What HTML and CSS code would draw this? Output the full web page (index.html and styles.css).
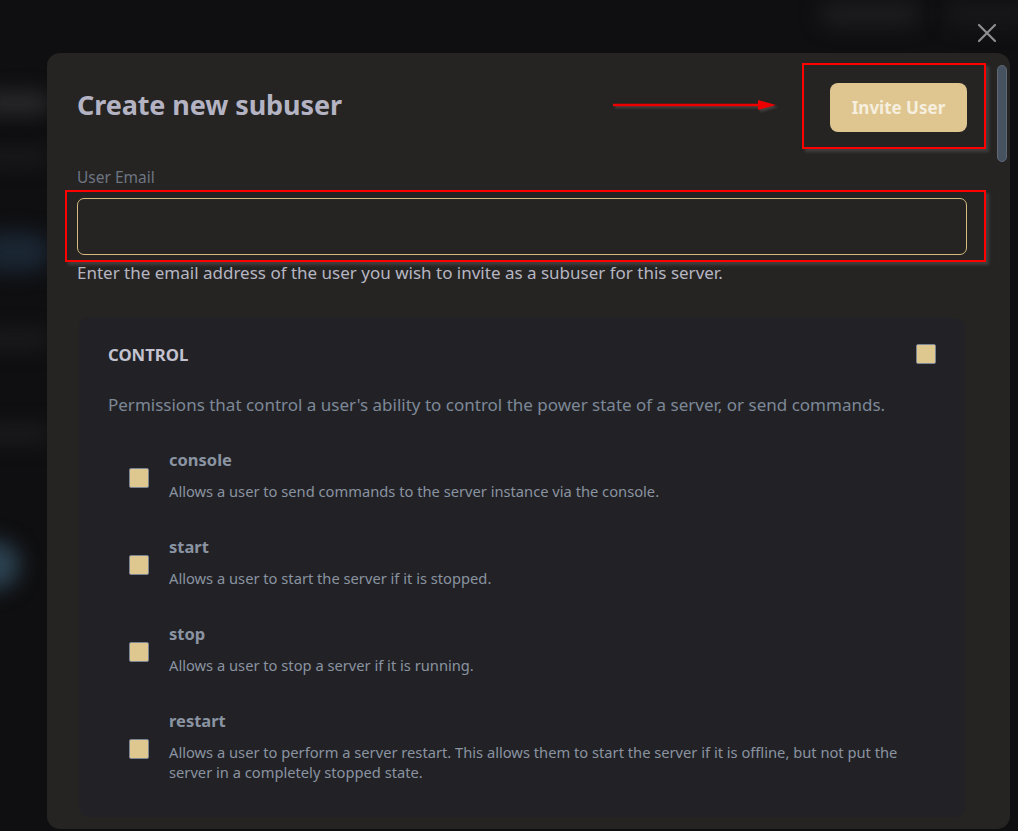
FILE: index.html
```html
<!DOCTYPE html>
<html lang="en">
<head>
<meta charset="utf-8">
<title>Create new subuser</title>
<link rel="stylesheet" href="styles.css">
</head>
<body>
<div class="backdrop" aria-hidden="true">
  <div class="blob blob-a"></div>
  <div class="blob blob-b"></div>
  <div class="blob blob-c"></div>
  <div class="blob blob-d"></div>
  <div class="blob blob-e"></div>
  <div class="blob blob-f"></div>
  <div class="blob blob-g"></div>
  <div class="blob blob-h"></div>
</div>

<button class="close" aria-label="Close">
  <svg viewBox="0 0 20 20" width="20" height="20"><path d="M2 2L18 18M18 2L2 18" stroke="#8e8e90" stroke-width="2.2" stroke-linecap="round"/></svg>
</button>

<div class="modal">
  <div class="scrollbar"></div>
  <div class="mark mark-button"></div>
  <div class="mark mark-input"></div>
  <svg class="arrow" viewBox="0 0 170 12" width="170" height="12"><path d="M0 6H148" stroke="#e00" stroke-width="2.5"/><path d="M145 1L163 6L145 11Z" fill="#e00"/></svg>

  <div class="head">
    <h1 class="title">Create new subuser</h1>
    <button class="invite">Invite User</button>
  </div>

  <label class="label" for="email">User Email</label>
  <input class="input" id="email" type="email">
  <p class="help">Enter the email address of the user you wish to invite as a subuser for this server.</p>

  <section class="panel">
    <div class="panel-head">
      <h2 class="panel-title">CONTROL</h2>
      <span class="check"></span>
    </div>
    <p class="panel-desc">Permissions that control a user's ability to control the power state of a server, or send commands.</p>

    <div class="perm">
      <span class="check"></span>
      <div class="perm-text">
        <div class="perm-name">console</div>
        <div class="perm-desc">Allows a user to send commands to the server instance via the console.</div>
      </div>
    </div>
    <div class="perm">
      <span class="check"></span>
      <div class="perm-text">
        <div class="perm-name">start</div>
        <div class="perm-desc">Allows a user to start the server if it is stopped.</div>
      </div>
    </div>
    <div class="perm">
      <span class="check"></span>
      <div class="perm-text">
        <div class="perm-name">stop</div>
        <div class="perm-desc">Allows a user to stop a server if it is running.</div>
      </div>
    </div>
    <div class="perm">
      <span class="check"></span>
      <div class="perm-text">
        <div class="perm-name">restart</div>
        <div class="perm-desc">Allows a user to perform a server restart. This allows them to start the server if it is offline, but not put the server in a completely stopped state.</div>
      </div>
    </div>
  </section>
</div>
</body>
</html>
```

FILE: styles.css
```css
* { box-sizing: border-box; }

html, body {
  margin: 0;
  height: 831px;
  overflow: hidden;
}

body {
  background: #0f0f11;
  font-family: "Noto Sans", "Open Sans", sans-serif;
  position: relative;
  padding: 53px 8px 0 47px;
}

.backdrop {
  position: absolute;
  inset: 0;
  overflow: hidden;
}

.blob {
  position: absolute;
  filter: blur(10px);
  border-radius: 20px;
}
.blob-a { left: -20px; top: 92px; width: 70px; height: 22px; background: #2a2a2d; }
.blob-b { left: -20px; top: 150px; width: 70px; height: 14px; background: #1c1c1f; }
.blob-c { left: -20px; top: 232px; width: 70px; height: 40px; background: #1a2633; }
.blob-d { left: -20px; top: 330px; width: 70px; height: 18px; background: #1c1c1f; }
.blob-e { left: -20px; top: 425px; width: 70px; height: 18px; background: #1c1c20; }
.blob-f { left: -30px; top: 540px; width: 50px; height: 50px; background: #2b4150; border-radius: 50%; }
.blob-g { left: 820px; top: 2px; width: 100px; height: 24px; background: #1d1d20; }
.blob-h { left: 945px; top: 2px; width: 90px; height: 24px; background: #18181b; }

.close {
  position: absolute;
  top: 23px;
  left: 977px;
  width: 20px;
  height: 20px;
  padding: 0;
  border: 0;
  background: none;
}
.close svg { display: block; }

.modal {
  position: relative;
  width: 963px;
  height: 776px;
  background: #252422;
  border-radius: 13px;
  padding: 30px 43px 0 30px;
  display: flex;
  flex-direction: column;
  overflow: hidden;
}

.modal > * { flex-shrink: 0; }

.scrollbar {
  position: absolute;
  left: 950px;
  top: 12px;
  width: 10px;
  height: 97px;
  background: #475260;
  border: 1px solid #5d6977;
  border-radius: 5px;
}

.mark {
  position: absolute;
  border: 2px solid #ff0000;
  box-shadow: 3px 3px 3px rgba(90, 90, 90, 0.55);
}
.mark-button { left: 755px; top: 10px; width: 184px; height: 86px; }
.mark-input { left: 18px; top: 137px; width: 921px; height: 72px; }

.arrow {
  position: absolute;
  left: 566px;
  top: 46px;
  filter: drop-shadow(2px 2px 1px rgba(90, 90, 90, 0.6));
}

.head {
  display: flex;
  justify-content: space-between;
  align-items: center;
  height: 49px;
}

.title {
  margin: 0;
  padding-bottom: 6px;
  font-size: 27px;
  font-weight: 700;
  color: #b4b3c3;
  letter-spacing: -0.1px;
}

.invite {
  width: 137px;
  height: 49px;
  border: 0;
  border-radius: 8px;
  background: #dfc691;
  color: #f6efdf;
  font-family: inherit;
  font-size: 17px;
  font-weight: 700;
  padding: 0;
}

.label {
  margin-top: 34px;
  font-size: 15.5px;
  line-height: 22px;
  color: #6e7583;
}

.input {
  margin-top: 10px;
  height: 57px;
  width: 890px;
  background: #252422;
  border: 1px solid #d5bb80;
  border-radius: 7px;
  outline: none;
}

.help {
  margin: 6px 0 0;
  font-size: 17px;
  line-height: 24px;
  color: #b6b6c2;
}

.panel {
  margin: 33px 2px 0;
  background: #222226;
  border-radius: 9px;
  padding: 24px 29px 0;
}

.panel-head {
  display: flex;
  justify-content: space-between;
  align-items: center;
  height: 24px;
}

.panel-title {
  margin: 0;
  font-size: 16.7px;
  font-weight: 700;
  color: #c3c2d0;
}

.panel-desc {
  margin: 27px 0 32px;
  font-size: 17px;
  line-height: 24px;
  color: #7d8897;
}

.check {
  flex: none;
  display: block;
  width: 20px;
  height: 20px;
  background: #dfc88f;
  border: 1px solid #7b8594;
  border-radius: 2px;
}

.perm {
  display: flex;
  align-items: center;
  gap: 20px;
  padding-left: 21px;
  margin-bottom: 35px;
}

.perm .check { margin-top: 5px; }

.perm-name {
  font-size: 16.5px;
  font-weight: 700;
  color: #8a94a2;
  line-height: 22px;
}

.perm-desc {
  margin-top: 10px;
  font-size: 14.7px;
  line-height: 20px;
  color: #8a93a0;
  max-width: 740px;
}
```
